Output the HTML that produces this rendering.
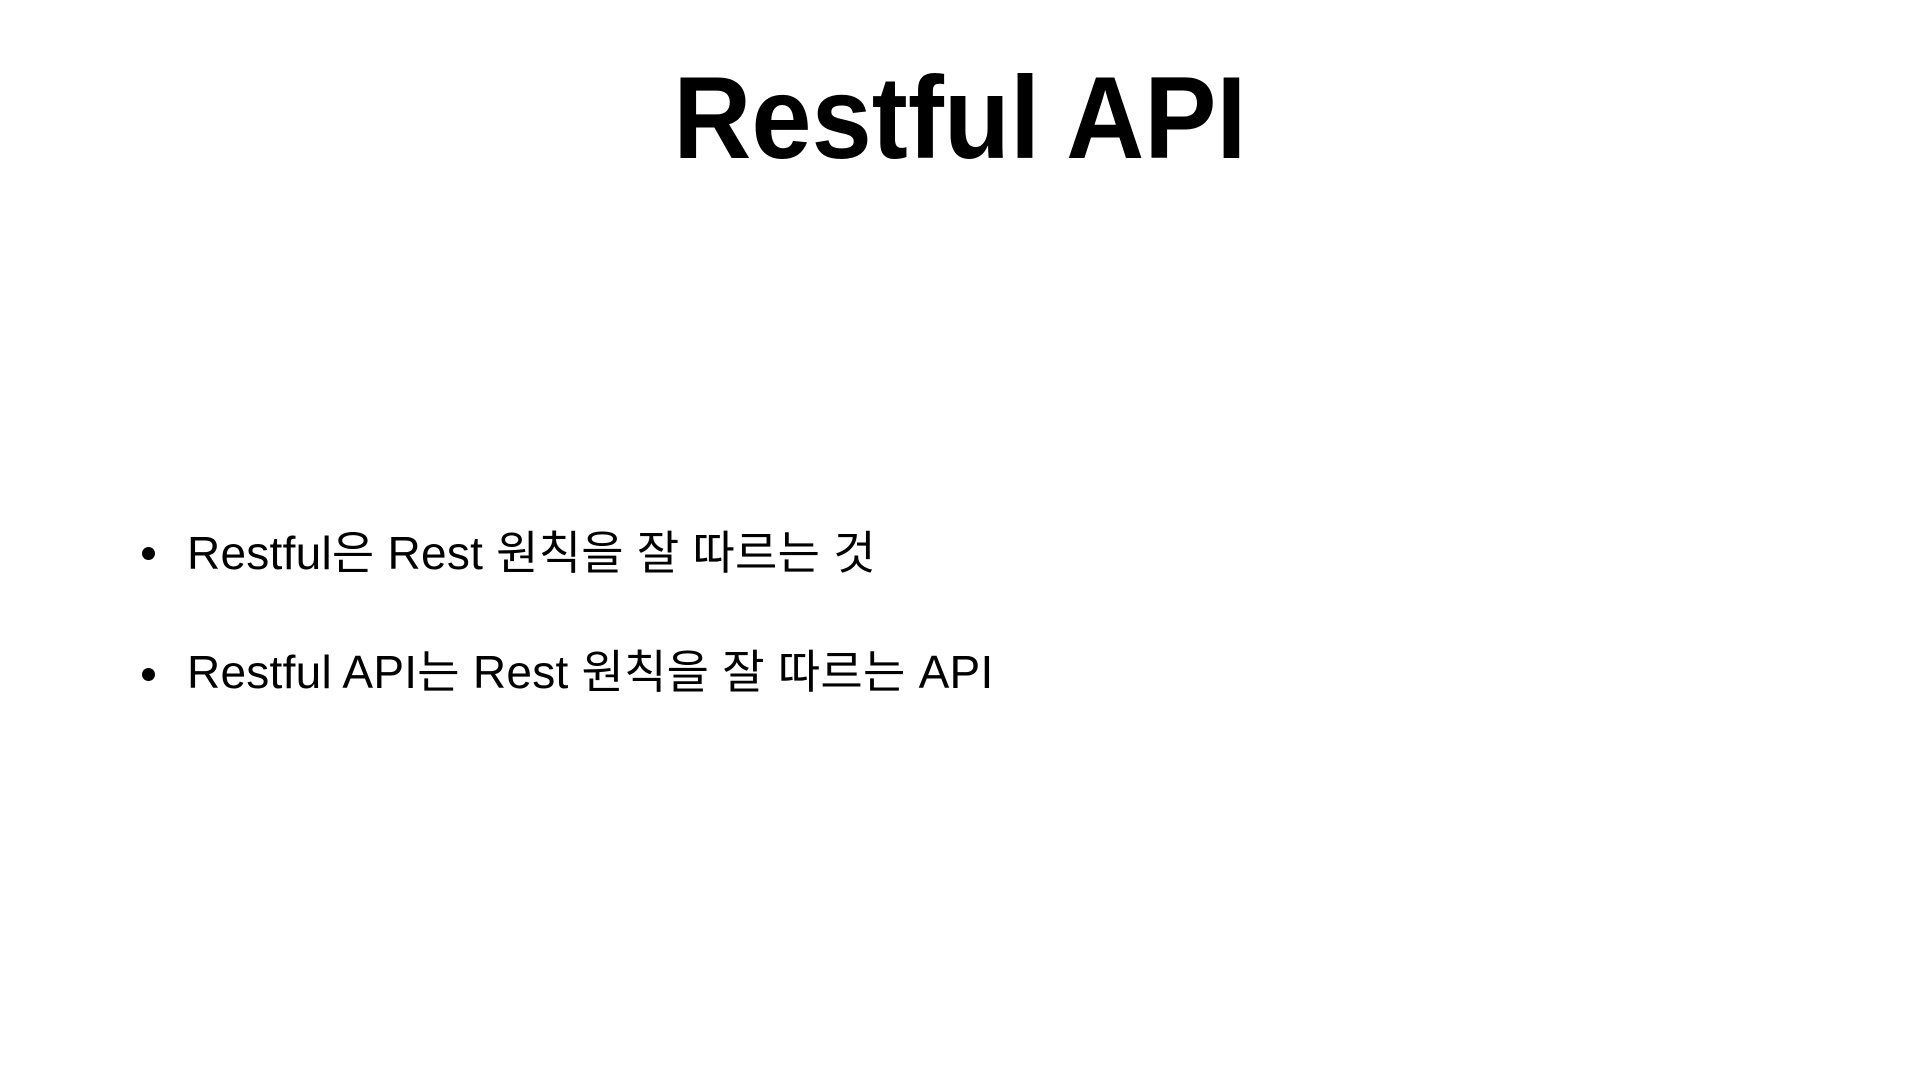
<!DOCTYPE html>
<html><head><meta charset="utf-8"><style>
html,body{margin:0;padding:0;background:#fff;width:1920px;height:1080px;overflow:hidden}
body{position:relative;font-family:"Liberation Sans","Noto Sans CJK KR",sans-serif;color:#000}
.title{position:absolute;left:0;width:1920px;top:48px;text-align:center;font-weight:bold;font-size:117px;line-height:140px}
.title span{display:inline-block;transform:scaleX(0.925)}
.b{position:absolute;left:187px;font-size:46px;line-height:50px;letter-spacing:0.25px}
.dot{position:absolute;left:142px;width:13px;height:13px;border-radius:50%;background:#000}
</style></head><body>
<div class="title"><span>Restful API</span></div>
<div class="dot" style="top:547px"></div>
<div class="b" style="top:528px">Restful은 Rest 원칙을 잘 따르는 것</div>
<div class="dot" style="top:668px"></div>
<div class="b" style="top:647px">Restful API는 Rest 원칙을 잘 따르는 API</div>
</body></html>
